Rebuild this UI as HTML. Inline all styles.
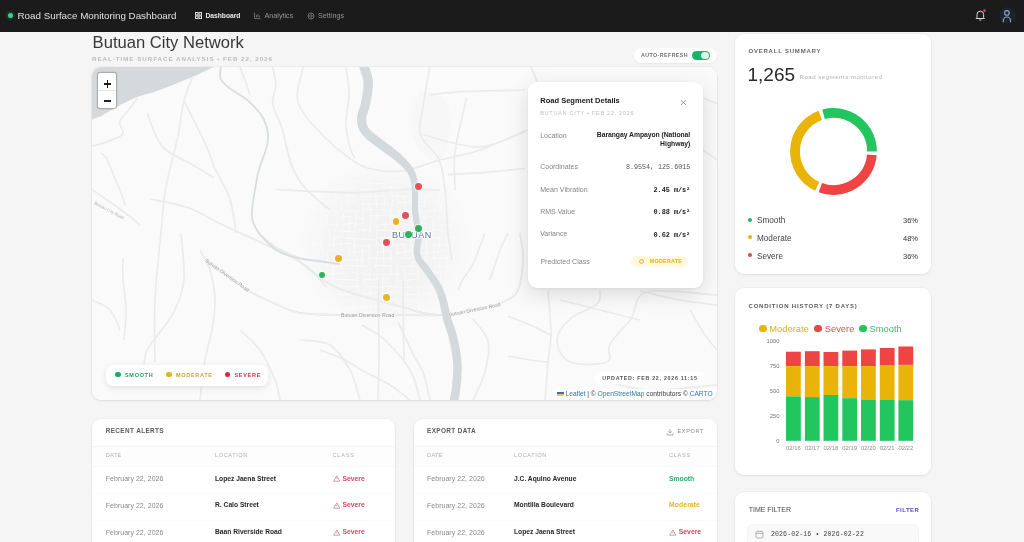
<!DOCTYPE html>
<html><head><meta charset="utf-8">
<style>
*{box-sizing:border-box;margin:0;padding:0}
html,body{width:1024px;height:542px;overflow:hidden;background:#f5f5f5;font-family:"Liberation Sans",sans-serif;color:#222}
.abs{position:absolute}
#hdr{position:absolute;left:0;top:0;width:1024px;height:31.5px;background:#1b1b1b}
.card{position:absolute;background:#fff;border-radius:9px;box-shadow:0 1px 3px rgba(0,0,0,0.07),0 0 0 1px rgba(0,0,0,0.025)}
.mk{position:absolute;width:6.8px;height:6.8px;border-radius:50%;margin:-3.4px 0 0 -3.4px;box-shadow:0 0 1.5px 1px rgba(255,255,255,.7)}
.t{position:absolute;white-space:nowrap;line-height:1}
</style></head><body><div id="root" style="position:absolute;left:0;top:0;width:1024px;height:542px;will-change:transform">
<div id="hdr">
  <div class="abs" style="left:8px;top:13px;width:5px;height:5px;border-radius:50%;background:#3ecf8e;box-shadow:0 0 4px rgba(62,207,142,.6)"></div>
  <div class="t" style="left:17.5px;top:11px;font-size:9.8px;color:#e0e0e0">Road Surface Monitoring Dashboard</div>
  <!-- nav -->
  <svg class="abs" style="left:195px;top:12px" width="7" height="7" viewBox="0 0 7 7"><g fill="none" stroke="#ddd" stroke-width="1"><rect x="0.5" y="0.5" width="2.5" height="2.5"/><rect x="4" y="0.5" width="2.5" height="2.5"/><rect x="0.5" y="4" width="2.5" height="2.5"/><rect x="4" y="4" width="2.5" height="2.5"/></g></svg>
  <div class="t" style="left:205.5px;top:12.6px;font-size:6.7px;font-weight:bold;color:#ececec">Dashboard</div>
  <svg class="abs" style="left:254px;top:12px" width="7" height="7" viewBox="0 0 7 7"><g fill="none" stroke="#777" stroke-width="0.9"><path d="M0.5 0.5V6.5H6.5"/><path d="M2.5 5V3M4 5V2M5.5 5V3.5"/></g></svg>
  <div class="t" style="left:264.5px;top:12px;font-size:7.2px;color:#969696">Analytics</div>
  <svg class="abs" style="left:307px;top:11.5px" width="8" height="8" viewBox="0 0 8 8"><g fill="none" stroke="#777" stroke-width="0.9"><circle cx="4" cy="4" r="1.3"/><circle cx="4" cy="4" r="3"/></g></svg>
  <div class="t" style="left:318px;top:12px;font-size:7.2px;color:#969696">Settings</div>
  <!-- bell -->
  <svg class="abs" style="left:975px;top:9px" width="11" height="12" viewBox="0 0 11 12"><g fill="none" stroke="#d8d8d8" stroke-width="1"><path d="M2 8.5V5.5a3.3 3.3 0 0 1 6.6 0V8.5L9.5 9.5H1.1Z"/><path d="M4.3 11h2"/></g><circle cx="9.5" cy="1.6" r="1.3" fill="#e0445a"/></svg>
  <svg class="abs" style="left:999px;top:7px" width="17" height="17" viewBox="0 0 17 17"><circle cx="8.5" cy="8.5" r="8.3" fill="#1d2333"/><g fill="none" stroke="#9aa5c2" stroke-width="1.1"><circle cx="7.9" cy="5.9" r="2.3"/><path d="M4.3 15.2V13.6a3.6 3.6 0 0 1 7.2 0V15.2"/></g></svg>
</div>

<!-- title -->
<div class="t" style="left:92.6px;top:35px;font-size:16.6px;color:#383838">Butuan City Network</div>
<div class="t" style="left:92px;top:56.4px;font-size:6.2px;letter-spacing:0.975px;color:#bcbcbc;font-weight:bold">REAL-TIME SURFACE ANALYSIS • FEB 22, 2026</div>

<!-- auto refresh -->
<div class="abs" style="left:633.5px;top:47.6px;width:83px;height:15.8px;border-radius:8px;background:#fff;box-shadow:0 1px 2px rgba(0,0,0,.06)"></div>
<div class="t" style="left:641px;top:53.3px;font-size:5.3px;letter-spacing:0.42px;color:#707070;font-weight:bold">AUTO-REFRESH</div>
<div class="abs" style="left:692.3px;top:50.6px;width:17.5px;height:9.5px;border-radius:5px;background:#14b566"></div>
<div class="abs" style="left:701.3px;top:51.6px;width:7.5px;height:7.5px;border-radius:50%;background:#d8f8ea"></div>

<!-- map card -->
<div id="map" class="abs" style="left:92px;top:67px;width:625px;height:333px;border-radius:9px;overflow:hidden;background:#fafafa;box-shadow:0 1px 3px rgba(0,0,0,.08),0 0 0 1px rgba(0,0,0,.03)">
<svg width="625" height="333" viewBox="92 67 625 333" style="position:absolute;left:0;top:0">
<rect x="92" y="67" width="625" height="333" fill="#fafafa"/>
<defs><radialGradient id="cg" cx="0.5" cy="0.5" r="0.5"><stop offset="0" stop-color="#f1f1f1"/><stop offset="0.65" stop-color="#f4f4f4"/><stop offset="1" stop-color="#fafafa"/></radialGradient></defs>
<path d="M330.0 172.0 C336.7 170.0 356.7 161.5 370.0 160.0 C383.3 158.5 397.5 161.0 410.0 163.0 C422.5 165.0 435.3 166.2 445.0 172.0 C454.7 177.8 463.5 185.0 468.0 198.0 C472.5 211.0 473.0 234.7 472.0 250.0 C471.0 265.3 468.7 278.7 462.0 290.0 C455.3 301.3 445.3 311.3 432.0 318.0 C418.7 324.7 398.7 329.3 382.0 330.0 C365.3 330.7 344.8 328.3 332.0 322.0 C319.2 315.7 310.7 304.0 305.0 292.0 C299.3 280.0 297.5 264.5 298.0 250.0 C298.5 235.5 302.7 218.0 308.0 205.0 C313.3 192.0 326.3 177.5 330.0 172.0 Z" fill="url(#cg)"/>
<path d="M420.0 90.0 C424.2 91.7 440.0 93.3 445.0 100.0 C450.0 106.7 450.8 120.0 450.0 130.0 C449.2 140.0 445.0 156.7 440.0 160.0 C435.0 163.3 425.0 156.7 420.0 150.0 C415.0 143.3 410.0 130.0 410.0 120.0 C410.0 110.0 418.3 95.0 420.0 90.0 Z" fill="#f7f7f7"/>
<path d="M298.7 182.8L300.1 201.9" stroke="#fafafa" stroke-width="1"/>
<path d="M300.0 206.1L298.1 215.1" stroke="#fafafa" stroke-width="1"/>
<path d="M298.8 219.7L299.7 228.8" stroke="#fafafa" stroke-width="1"/>
<path d="M299.2 235.8L300.5 245.9" stroke="#fafafa" stroke-width="1"/>
<path d="M299.7 253.6L301.9 269.8" stroke="#fafafa" stroke-width="1"/>
<path d="M305.9 212.2L306.2 222.7" stroke="#fafafa" stroke-width="1"/>
<path d="M307.2 229.6L307.6 240.6" stroke="#fafafa" stroke-width="1"/>
<path d="M305.7 244.9L305.2 262.2" stroke="#fafafa" stroke-width="1"/>
<path d="M306.8 265.4L306.3 278.8" stroke="#fafafa" stroke-width="1"/>
<path d="M314.6 189.9L313.0 211.4" stroke="#fafafa" stroke-width="1"/>
<path d="M315.1 216.9L314.9 233.8" stroke="#fafafa" stroke-width="1"/>
<path d="M312.9 237.5L313.7 262.2" stroke="#fafafa" stroke-width="1"/>
<path d="M314.0 268.7L312.2 279.3" stroke="#fafafa" stroke-width="1"/>
<path d="M320.4 207.1L321.8 229.9" stroke="#fafafa" stroke-width="1"/>
<path d="M320.9 235.5L322.4 253.4" stroke="#fafafa" stroke-width="1"/>
<path d="M321.5 261.0L319.2 277.1" stroke="#fafafa" stroke-width="1"/>
<path d="M322.5 283.3L322.3 297.2" stroke="#fafafa" stroke-width="1"/>
<path d="M327.9 186.2L326.7 194.6" stroke="#fafafa" stroke-width="1"/>
<path d="M328.8 197.3L326.5 206.3" stroke="#fafafa" stroke-width="1"/>
<path d="M329.1 209.8L326.3 224.4" stroke="#fafafa" stroke-width="1"/>
<path d="M329.2 229.1L329.3 246.5" stroke="#fafafa" stroke-width="1"/>
<path d="M327.7 253.7L327.4 266.4" stroke="#fafafa" stroke-width="1"/>
<path d="M327.0 273.7L326.7 298.0" stroke="#fafafa" stroke-width="1"/>
<path d="M328.0 301.4L328.4 303.5" stroke="#fafafa" stroke-width="1"/>
<path d="M335.2 165.2L336.8 179.5" stroke="#fafafa" stroke-width="1"/>
<path d="M335.4 185.6L335.7 202.4" stroke="#fafafa" stroke-width="1"/>
<path d="M335.8 204.7L336.5 228.0" stroke="#fafafa" stroke-width="1"/>
<path d="M334.7 234.8L333.4 249.5" stroke="#fafafa" stroke-width="1"/>
<path d="M333.7 255.3L333.8 264.3" stroke="#fafafa" stroke-width="1"/>
<path d="M333.7 267.3L333.0 281.1" stroke="#fafafa" stroke-width="1"/>
<path d="M334.6 284.0L333.1 287.2" stroke="#fafafa" stroke-width="1"/>
<path d="M341.5 198.8L341.5 211.1" stroke="#fafafa" stroke-width="1"/>
<path d="M343.5 213.8L341.9 236.2" stroke="#fafafa" stroke-width="1"/>
<path d="M340.8 241.1L341.4 250.6" stroke="#fafafa" stroke-width="1"/>
<path d="M341.0 254.2L340.1 269.7" stroke="#fafafa" stroke-width="1"/>
<path d="M347.6 194.1L349.1 211.3" stroke="#fafafa" stroke-width="1"/>
<path d="M349.6 219.2L348.0 241.8" stroke="#fafafa" stroke-width="1"/>
<path d="M349.8 246.0L349.1 256.9" stroke="#fafafa" stroke-width="1"/>
<path d="M348.2 263.5L350.2 269.5" stroke="#fafafa" stroke-width="1"/>
<path d="M356.7 211.9L354.9 233.8" stroke="#fafafa" stroke-width="1"/>
<path d="M354.6 238.9L354.1 253.0" stroke="#fafafa" stroke-width="1"/>
<path d="M356.6 256.6L357.8 269.0" stroke="#fafafa" stroke-width="1"/>
<path d="M357.5 273.7L357.8 297.7" stroke="#fafafa" stroke-width="1"/>
<path d="M355.2 301.8L354.8 312.4" stroke="#fafafa" stroke-width="1"/>
<path d="M362.9 199.3L363.6 221.6" stroke="#fafafa" stroke-width="1"/>
<path d="M363.5 228.4L364.6 237.9" stroke="#fafafa" stroke-width="1"/>
<path d="M362.9 244.5L361.7 265.3" stroke="#fafafa" stroke-width="1"/>
<path d="M363.9 272.0L364.9 285.7" stroke="#fafafa" stroke-width="1"/>
<path d="M364.3 290.1L363.9 304.9" stroke="#fafafa" stroke-width="1"/>
<path d="M362.0 307.9L364.6 318.1" stroke="#fafafa" stroke-width="1"/>
<path d="M370.5 173.0L369.4 197.7" stroke="#fafafa" stroke-width="1"/>
<path d="M368.5 203.0L371.9 213.2" stroke="#fafafa" stroke-width="1"/>
<path d="M371.3 219.1L369.7 236.1" stroke="#fafafa" stroke-width="1"/>
<path d="M369.1 243.3L369.0 265.3" stroke="#fafafa" stroke-width="1"/>
<path d="M370.3 269.1L369.0 281.2" stroke="#fafafa" stroke-width="1"/>
<path d="M371.2 285.7L369.4 295.9" stroke="#fafafa" stroke-width="1"/>
<path d="M371.2 300.7L369.7 313.7" stroke="#fafafa" stroke-width="1"/>
<path d="M375.6 192.6L376.8 209.5" stroke="#fafafa" stroke-width="1"/>
<path d="M377.9 212.6L375.7 220.7" stroke="#fafafa" stroke-width="1"/>
<path d="M377.2 225.5L376.3 245.8" stroke="#fafafa" stroke-width="1"/>
<path d="M377.9 250.9L375.4 268.4" stroke="#fafafa" stroke-width="1"/>
<path d="M376.3 273.7L378.1 286.0" stroke="#fafafa" stroke-width="1"/>
<path d="M377.8 291.0L378.6 294.6" stroke="#fafafa" stroke-width="1"/>
<path d="M384.6 198.7L383.8 215.4" stroke="#fafafa" stroke-width="1"/>
<path d="M385.3 220.6L384.8 236.7" stroke="#fafafa" stroke-width="1"/>
<path d="M383.3 244.0L384.2 268.0" stroke="#fafafa" stroke-width="1"/>
<path d="M382.9 275.7L382.5 292.9" stroke="#fafafa" stroke-width="1"/>
<path d="M391.5 169.0L392.1 178.2" stroke="#fafafa" stroke-width="1"/>
<path d="M391.6 185.6L391.6 196.2" stroke="#fafafa" stroke-width="1"/>
<path d="M392.4 199.1L389.9 222.1" stroke="#fafafa" stroke-width="1"/>
<path d="M391.0 229.8L393.0 244.6" stroke="#fafafa" stroke-width="1"/>
<path d="M390.8 251.6L391.1 262.3" stroke="#fafafa" stroke-width="1"/>
<path d="M390.5 266.4L391.9 275.6" stroke="#fafafa" stroke-width="1"/>
<path d="M397.5 195.5L398.5 203.8" stroke="#fafafa" stroke-width="1"/>
<path d="M399.5 208.9L399.2 217.9" stroke="#fafafa" stroke-width="1"/>
<path d="M397.3 225.8L396.2 235.6" stroke="#fafafa" stroke-width="1"/>
<path d="M396.9 242.2L397.7 254.8" stroke="#fafafa" stroke-width="1"/>
<path d="M397.3 262.3L396.6 284.2" stroke="#fafafa" stroke-width="1"/>
<path d="M403.7 196.4L405.8 205.9" stroke="#fafafa" stroke-width="1"/>
<path d="M406.3 210.5L405.5 219.7" stroke="#fafafa" stroke-width="1"/>
<path d="M406.1 226.5L403.3 235.9" stroke="#fafafa" stroke-width="1"/>
<path d="M404.5 243.1L405.2 258.8" stroke="#fafafa" stroke-width="1"/>
<path d="M403.9 266.4L405.1 278.9" stroke="#fafafa" stroke-width="1"/>
<path d="M404.0 282.4L403.2 292.2" stroke="#fafafa" stroke-width="1"/>
<path d="M404.4 295.4L406.0 305.5" stroke="#fafafa" stroke-width="1"/>
<path d="M410.6 192.5L411.0 206.4" stroke="#fafafa" stroke-width="1"/>
<path d="M412.2 208.5L410.8 229.0" stroke="#fafafa" stroke-width="1"/>
<path d="M410.8 233.8L413.3 257.7" stroke="#fafafa" stroke-width="1"/>
<path d="M413.0 262.3L411.6 271.6" stroke="#fafafa" stroke-width="1"/>
<path d="M420.0 202.8L419.8 216.7" stroke="#fafafa" stroke-width="1"/>
<path d="M418.5 222.5L417.2 237.3" stroke="#fafafa" stroke-width="1"/>
<path d="M419.7 240.1L418.0 249.3" stroke="#fafafa" stroke-width="1"/>
<path d="M420.0 252.3L420.5 261.7" stroke="#fafafa" stroke-width="1"/>
<path d="M418.2 267.8L418.2 280.6" stroke="#fafafa" stroke-width="1"/>
<path d="M418.8 285.3L418.1 296.0" stroke="#fafafa" stroke-width="1"/>
<path d="M419.1 303.8L418.0 323.9" stroke="#fafafa" stroke-width="1"/>
<path d="M425.6 182.0L425.9 190.0" stroke="#fafafa" stroke-width="1"/>
<path d="M426.0 195.1L424.0 206.5" stroke="#fafafa" stroke-width="1"/>
<path d="M425.7 210.1L424.2 219.6" stroke="#fafafa" stroke-width="1"/>
<path d="M425.2 221.7L426.3 234.9" stroke="#fafafa" stroke-width="1"/>
<path d="M426.5 240.1L426.9 260.8" stroke="#fafafa" stroke-width="1"/>
<path d="M425.5 268.1L427.9 282.7" stroke="#fafafa" stroke-width="1"/>
<path d="M434.0 204.8L434.6 213.6" stroke="#fafafa" stroke-width="1"/>
<path d="M433.9 219.3L431.6 239.8" stroke="#fafafa" stroke-width="1"/>
<path d="M434.0 245.0L434.2 261.5" stroke="#fafafa" stroke-width="1"/>
<path d="M434.2 268.5L433.7 286.4" stroke="#fafafa" stroke-width="1"/>
<path d="M431.6 292.6L431.5 301.8" stroke="#fafafa" stroke-width="1"/>
<path d="M440.4 170.8L440.5 188.3" stroke="#fafafa" stroke-width="1"/>
<path d="M438.5 194.3L441.2 210.7" stroke="#fafafa" stroke-width="1"/>
<path d="M440.1 217.2L440.6 233.7" stroke="#fafafa" stroke-width="1"/>
<path d="M439.3 236.1L438.3 256.6" stroke="#fafafa" stroke-width="1"/>
<path d="M439.1 260.2L441.0 280.6" stroke="#fafafa" stroke-width="1"/>
<path d="M439.6 288.5L439.9 304.9" stroke="#fafafa" stroke-width="1"/>
<path d="M440.4 311.0L440.6 314.3" stroke="#fafafa" stroke-width="1"/>
<path d="M446.4 173.1L447.3 193.7" stroke="#fafafa" stroke-width="1"/>
<path d="M446.3 195.8L447.7 204.8" stroke="#fafafa" stroke-width="1"/>
<path d="M446.4 211.0L447.1 230.5" stroke="#fafafa" stroke-width="1"/>
<path d="M445.9 235.3L448.6 251.2" stroke="#fafafa" stroke-width="1"/>
<path d="M448.3 254.4L445.1 276.5" stroke="#fafafa" stroke-width="1"/>
<path d="M453.3 210.1L452.8 225.7" stroke="#fafafa" stroke-width="1"/>
<path d="M454.2 233.4L452.6 245.0" stroke="#fafafa" stroke-width="1"/>
<path d="M452.9 250.1L455.3 274.3" stroke="#fafafa" stroke-width="1"/>
<path d="M454.6 279.4L452.9 302.5" stroke="#fafafa" stroke-width="1"/>
<path d="M452.6 309.8L452.0 322.9" stroke="#fafafa" stroke-width="1"/>
<path d="M460.5 189.8L460.3 200.2" stroke="#fafafa" stroke-width="1"/>
<path d="M461.8 207.2L462.4 215.3" stroke="#fafafa" stroke-width="1"/>
<path d="M461.6 218.0L462.6 241.7" stroke="#fafafa" stroke-width="1"/>
<path d="M460.7 245.5L463.0 259.8" stroke="#fafafa" stroke-width="1"/>
<path d="M460.8 265.3L460.1 279.5" stroke="#fafafa" stroke-width="1"/>
<path d="M469.3 170.6L467.0 183.4" stroke="#fafafa" stroke-width="1"/>
<path d="M467.1 187.0L467.5 203.7" stroke="#fafafa" stroke-width="1"/>
<path d="M468.9 211.5L468.5 234.5" stroke="#fafafa" stroke-width="1"/>
<path d="M468.1 242.0L468.9 266.0" stroke="#fafafa" stroke-width="1"/>
<path d="M467.9 268.3L469.0 288.7" stroke="#fafafa" stroke-width="1"/>
<path d="M466.6 294.6L469.7 307.5" stroke="#fafafa" stroke-width="1"/>
<path d="M467.5 310.2L467.2 314.3" stroke="#fafafa" stroke-width="1"/>
<path d="M339.1 167.4L361.5 168.2" stroke="#fafafa" stroke-width="1"/>
<path d="M365.8 167.0L377.5 166.8" stroke="#fafafa" stroke-width="1"/>
<path d="M385.0 167.2L403.9 169.6" stroke="#fafafa" stroke-width="1"/>
<path d="M411.9 166.9L429.8 166.8" stroke="#fafafa" stroke-width="1"/>
<path d="M432.3 166.8L447.8 167.0" stroke="#fafafa" stroke-width="1"/>
<path d="M322.8 174.7L347.3 174.7" stroke="#fafafa" stroke-width="1"/>
<path d="M352.4 174.5L368.7 173.2" stroke="#fafafa" stroke-width="1"/>
<path d="M372.4 173.9L401.7 175.0" stroke="#fafafa" stroke-width="1"/>
<path d="M407.4 174.1L434.4 174.1" stroke="#fafafa" stroke-width="1"/>
<path d="M437.9 174.8L454.7 176.8" stroke="#fafafa" stroke-width="1"/>
<path d="M461.8 173.6L468.4 173.1" stroke="#fafafa" stroke-width="1"/>
<path d="M335.8 180.5L356.7 181.6" stroke="#fafafa" stroke-width="1"/>
<path d="M364.3 183.1L390.5 183.9" stroke="#fafafa" stroke-width="1"/>
<path d="M394.0 181.0L404.4 182.1" stroke="#fafafa" stroke-width="1"/>
<path d="M410.5 182.7L439.2 182.6" stroke="#fafafa" stroke-width="1"/>
<path d="M445.8 182.2L455.1 180.2" stroke="#fafafa" stroke-width="1"/>
<path d="M309.3 188.4L331.5 187.5" stroke="#fafafa" stroke-width="1"/>
<path d="M335.0 189.6L357.0 187.4" stroke="#fafafa" stroke-width="1"/>
<path d="M359.4 189.2L379.0 188.6" stroke="#fafafa" stroke-width="1"/>
<path d="M382.3 187.5L403.5 188.2" stroke="#fafafa" stroke-width="1"/>
<path d="M408.3 189.4L437.4 190.5" stroke="#fafafa" stroke-width="1"/>
<path d="M442.3 188.2L455.4 190.8" stroke="#fafafa" stroke-width="1"/>
<path d="M461.6 187.6L469.4 189.0" stroke="#fafafa" stroke-width="1"/>
<path d="M316.8 197.3L339.5 194.9" stroke="#fafafa" stroke-width="1"/>
<path d="M341.7 195.8L357.1 196.7" stroke="#fafafa" stroke-width="1"/>
<path d="M360.3 196.7L385.8 196.0" stroke="#fafafa" stroke-width="1"/>
<path d="M389.1 195.4L418.4 197.3" stroke="#fafafa" stroke-width="1"/>
<path d="M421.8 196.8L434.7 195.2" stroke="#fafafa" stroke-width="1"/>
<path d="M442.4 195.1L448.2 194.9" stroke="#fafafa" stroke-width="1"/>
<path d="M326.6 202.7L337.8 201.9" stroke="#fafafa" stroke-width="1"/>
<path d="M345.7 201.7L356.8 201.2" stroke="#fafafa" stroke-width="1"/>
<path d="M361.2 204.2L388.9 203.9" stroke="#fafafa" stroke-width="1"/>
<path d="M396.9 202.5L425.4 201.7" stroke="#fafafa" stroke-width="1"/>
<path d="M433.0 201.6L457.4 203.7" stroke="#fafafa" stroke-width="1"/>
<path d="M461.7 202.5L470.4 201.7" stroke="#fafafa" stroke-width="1"/>
<path d="M311.2 208.9L340.2 211.9" stroke="#fafafa" stroke-width="1"/>
<path d="M343.5 211.0L359.3 211.3" stroke="#fafafa" stroke-width="1"/>
<path d="M363.9 209.9L373.0 209.5" stroke="#fafafa" stroke-width="1"/>
<path d="M380.5 209.6L392.7 211.6" stroke="#fafafa" stroke-width="1"/>
<path d="M394.9 210.9L412.0 211.1" stroke="#fafafa" stroke-width="1"/>
<path d="M414.2 208.7L423.0 211.7" stroke="#fafafa" stroke-width="1"/>
<path d="M426.5 211.2L451.0 209.4" stroke="#fafafa" stroke-width="1"/>
<path d="M338.3 217.6L352.1 216.3" stroke="#fafafa" stroke-width="1"/>
<path d="M355.7 217.8L363.8 218.7" stroke="#fafafa" stroke-width="1"/>
<path d="M369.6 215.6L398.4 215.9" stroke="#fafafa" stroke-width="1"/>
<path d="M403.2 218.4L432.3 216.5" stroke="#fafafa" stroke-width="1"/>
<path d="M435.8 217.0L453.2 218.7" stroke="#fafafa" stroke-width="1"/>
<path d="M456.3 217.7L459.7 218.3" stroke="#fafafa" stroke-width="1"/>
<path d="M324.3 223.6L339.3 225.1" stroke="#fafafa" stroke-width="1"/>
<path d="M341.8 224.8L354.1 223.0" stroke="#fafafa" stroke-width="1"/>
<path d="M356.5 224.2L365.3 223.3" stroke="#fafafa" stroke-width="1"/>
<path d="M373.2 225.5L400.6 223.1" stroke="#fafafa" stroke-width="1"/>
<path d="M403.1 224.0L413.2 224.8" stroke="#fafafa" stroke-width="1"/>
<path d="M417.9 223.8L431.0 224.5" stroke="#fafafa" stroke-width="1"/>
<path d="M437.1 225.0L450.5 224.7" stroke="#fafafa" stroke-width="1"/>
<path d="M333.6 230.6L354.1 232.0" stroke="#fafafa" stroke-width="1"/>
<path d="M357.3 230.2L370.7 229.6" stroke="#fafafa" stroke-width="1"/>
<path d="M378.0 230.5L398.8 230.6" stroke="#fafafa" stroke-width="1"/>
<path d="M406.7 230.2L425.9 232.2" stroke="#fafafa" stroke-width="1"/>
<path d="M431.8 229.8L449.4 230.9" stroke="#fafafa" stroke-width="1"/>
<path d="M333.6 237.4L342.5 236.5" stroke="#fafafa" stroke-width="1"/>
<path d="M345.6 238.2L375.1 239.7" stroke="#fafafa" stroke-width="1"/>
<path d="M379.3 237.8L406.3 237.0" stroke="#fafafa" stroke-width="1"/>
<path d="M413.0 236.8L441.8 238.4" stroke="#fafafa" stroke-width="1"/>
<path d="M447.5 237.6L460.3 236.6" stroke="#fafafa" stroke-width="1"/>
<path d="M463.5 238.3L469.3 238.6" stroke="#fafafa" stroke-width="1"/>
<path d="M300.5 244.1L323.4 244.2" stroke="#fafafa" stroke-width="1"/>
<path d="M326.6 245.1L352.1 243.3" stroke="#fafafa" stroke-width="1"/>
<path d="M354.7 245.2L371.4 245.6" stroke="#fafafa" stroke-width="1"/>
<path d="M373.9 245.6L385.5 244.6" stroke="#fafafa" stroke-width="1"/>
<path d="M389.2 246.4L404.0 244.2" stroke="#fafafa" stroke-width="1"/>
<path d="M409.4 244.7L425.3 246.5" stroke="#fafafa" stroke-width="1"/>
<path d="M433.3 244.1L449.3 245.9" stroke="#fafafa" stroke-width="1"/>
<path d="M300.2 253.0L317.6 251.6" stroke="#fafafa" stroke-width="1"/>
<path d="M324.9 251.0L343.0 250.1" stroke="#fafafa" stroke-width="1"/>
<path d="M348.3 253.2L370.4 250.4" stroke="#fafafa" stroke-width="1"/>
<path d="M376.1 252.0L392.3 250.6" stroke="#fafafa" stroke-width="1"/>
<path d="M396.0 253.3L415.5 250.4" stroke="#fafafa" stroke-width="1"/>
<path d="M420.4 253.4L446.1 250.8" stroke="#fafafa" stroke-width="1"/>
<path d="M448.9 253.4L468.9 251.9" stroke="#fafafa" stroke-width="1"/>
<path d="M337.0 259.4L364.9 260.3" stroke="#fafafa" stroke-width="1"/>
<path d="M367.9 258.2L393.2 258.6" stroke="#fafafa" stroke-width="1"/>
<path d="M400.3 258.0L426.5 257.9" stroke="#fafafa" stroke-width="1"/>
<path d="M430.9 258.7L450.3 257.5" stroke="#fafafa" stroke-width="1"/>
<path d="M329.0 266.2L337.9 267.0" stroke="#fafafa" stroke-width="1"/>
<path d="M340.1 264.9L366.6 266.4" stroke="#fafafa" stroke-width="1"/>
<path d="M371.9 265.4L393.7 265.7" stroke="#fafafa" stroke-width="1"/>
<path d="M399.2 266.5L416.5 265.8" stroke="#fafafa" stroke-width="1"/>
<path d="M421.2 266.4L429.7 266.0" stroke="#fafafa" stroke-width="1"/>
<path d="M433.1 266.8L457.9 265.8" stroke="#fafafa" stroke-width="1"/>
<path d="M461.0 264.8L468.7 264.5" stroke="#fafafa" stroke-width="1"/>
<path d="M303.7 271.6L322.9 273.5" stroke="#fafafa" stroke-width="1"/>
<path d="M325.4 273.8L349.5 273.0" stroke="#fafafa" stroke-width="1"/>
<path d="M351.8 272.6L370.9 274.8" stroke="#fafafa" stroke-width="1"/>
<path d="M373.8 274.5L400.6 273.9" stroke="#fafafa" stroke-width="1"/>
<path d="M407.5 274.4L419.8 273.0" stroke="#fafafa" stroke-width="1"/>
<path d="M427.5 272.0L454.1 274.2" stroke="#fafafa" stroke-width="1"/>
<path d="M302.6 279.0L327.3 281.6" stroke="#fafafa" stroke-width="1"/>
<path d="M330.9 278.9L356.9 280.0" stroke="#fafafa" stroke-width="1"/>
<path d="M364.4 279.3L377.0 280.0" stroke="#fafafa" stroke-width="1"/>
<path d="M380.9 279.0L389.7 278.6" stroke="#fafafa" stroke-width="1"/>
<path d="M397.3 281.2L420.2 278.7" stroke="#fafafa" stroke-width="1"/>
<path d="M427.0 280.1L437.5 280.5" stroke="#fafafa" stroke-width="1"/>
<path d="M441.6 280.2L451.2 280.3" stroke="#fafafa" stroke-width="1"/>
<path d="M304.2 286.7L326.0 288.2" stroke="#fafafa" stroke-width="1"/>
<path d="M329.6 287.2L359.4 286.4" stroke="#fafafa" stroke-width="1"/>
<path d="M366.0 286.0L383.7 288.0" stroke="#fafafa" stroke-width="1"/>
<path d="M386.0 286.3L412.1 287.6" stroke="#fafafa" stroke-width="1"/>
<path d="M420.0 287.5L440.9 286.3" stroke="#fafafa" stroke-width="1"/>
<path d="M442.9 285.9L451.6 287.5" stroke="#fafafa" stroke-width="1"/>
<path d="M456.2 288.2L471.8 285.5" stroke="#fafafa" stroke-width="1"/>
<path d="M326.1 293.6L334.2 292.4" stroke="#fafafa" stroke-width="1"/>
<path d="M338.3 294.3L351.3 294.4" stroke="#fafafa" stroke-width="1"/>
<path d="M354.5 293.9L376.2 292.5" stroke="#fafafa" stroke-width="1"/>
<path d="M383.8 292.9L397.2 292.4" stroke="#fafafa" stroke-width="1"/>
<path d="M403.0 294.8L430.2 293.6" stroke="#fafafa" stroke-width="1"/>
<path d="M433.8 294.4L440.7 294.2" stroke="#fafafa" stroke-width="1"/>
<path d="M325.8 301.7L354.4 300.0" stroke="#fafafa" stroke-width="1"/>
<path d="M361.9 301.1L370.8 300.6" stroke="#fafafa" stroke-width="1"/>
<path d="M374.3 301.8L383.5 299.0" stroke="#fafafa" stroke-width="1"/>
<path d="M388.8 299.9L417.5 299.8" stroke="#fafafa" stroke-width="1"/>
<path d="M423.2 301.4L442.3 302.3" stroke="#fafafa" stroke-width="1"/>
<path d="M445.4 300.4L454.2 299.2" stroke="#fafafa" stroke-width="1"/>
<path d="M331.3 309.0L339.5 309.0" stroke="#fafafa" stroke-width="1"/>
<path d="M344.3 307.9L368.6 306.9" stroke="#fafafa" stroke-width="1"/>
<path d="M371.2 306.6L384.3 307.3" stroke="#fafafa" stroke-width="1"/>
<path d="M390.8 309.0L414.1 308.8" stroke="#fafafa" stroke-width="1"/>
<path d="M417.7 307.8L437.9 309.2" stroke="#fafafa" stroke-width="1"/>
<path d="M443.0 308.4L456.9 309.9" stroke="#fafafa" stroke-width="1"/>
<path d="M460.2 306.5L462.9 307.0" stroke="#fafafa" stroke-width="1"/>
<path d="M329.8 314.5L354.2 316.5" stroke="#fafafa" stroke-width="1"/>
<path d="M358.1 316.2L371.4 315.5" stroke="#fafafa" stroke-width="1"/>
<path d="M377.6 316.4L400.2 314.9" stroke="#fafafa" stroke-width="1"/>
<path d="M407.2 316.1L430.6 314.7" stroke="#fafafa" stroke-width="1"/>
<path d="M436.9 314.4L457.5 313.8" stroke="#fafafa" stroke-width="1"/>
<path d="M463.2 316.2L470.2 313.6" stroke="#fafafa" stroke-width="1"/>
<path d="M304.3 320.9L319.9 320.1" stroke="#fafafa" stroke-width="1"/>
<path d="M322.1 322.4L345.3 322.8" stroke="#fafafa" stroke-width="1"/>
<path d="M351.8 322.3L361.2 321.5" stroke="#fafafa" stroke-width="1"/>
<path d="M368.1 323.2L394.1 320.3" stroke="#fafafa" stroke-width="1"/>
<path d="M401.4 323.3L429.5 320.4" stroke="#fafafa" stroke-width="1"/>
<path d="M432.7 320.6L443.2 323.4" stroke="#fafafa" stroke-width="1"/>
<path d="M450.0 323.0L469.7 322.5" stroke="#fafafa" stroke-width="1"/>
<path d="M304.0 328.1L328.7 328.3" stroke="#fafafa" stroke-width="1"/>
<path d="M333.2 328.3L341.7 328.1" stroke="#fafafa" stroke-width="1"/>
<path d="M348.0 328.5L364.1 330.9" stroke="#fafafa" stroke-width="1"/>
<path d="M369.1 329.4L395.8 327.1" stroke="#fafafa" stroke-width="1"/>
<path d="M400.3 329.8L417.9 328.4" stroke="#fafafa" stroke-width="1"/>
<path d="M424.1 328.1L443.1 330.4" stroke="#fafafa" stroke-width="1"/>
<path d="M92 67 L214 67 L205 71 L196 75.4 L171.6 85.4 L153.3 92.3 L136.4 96.9 L119.6 105.3 L101.2 116 L92 119.5 Z" fill="#d5d9db"/>
<path d="M303.3 67.0 C302.3 71.6 297.2 86.9 297.2 94.6 C297.2 102.3 298.7 105.9 303.3 113.0 C307.9 120.1 317.7 130.3 324.8 137.4 C331.9 144.5 339.1 150.7 346.2 155.8 C353.3 160.9 358.3 165.5 367.6 168.0 C376.9 170.5 389.9 172.3 402.0 171.0 C414.1 169.7 427.0 163.5 440.0 160.0 C453.0 156.5 465.5 155.0 480.0 150.0 C494.5 145.0 519.2 133.3 527.0 130.0" fill="none" stroke="#ebebeb" stroke-width="1.7"/>
<path d="M272.7 67.0 C273.2 70.1 275.8 79.3 275.8 85.4 C275.8 91.5 271.7 96.6 272.7 103.8 C273.7 111.0 279.4 120.1 282.0 128.3 C284.6 136.5 286.0 145.7 288.0 152.8 C290.0 159.9 290.9 164.9 294.0 171.0 C297.1 177.1 300.4 183.0 306.4 189.5 C312.4 196.0 326.1 206.6 330.0 210.0" fill="none" stroke="#ebebeb" stroke-width="1.7"/>
<path d="M138.0 97.6 C136.5 99.7 131.9 105.9 128.8 110.0 C125.7 114.1 120.6 117.9 119.6 122.0 C118.6 126.1 125.7 130.8 122.6 134.4 C119.5 138.0 106.3 141.7 101.2 143.6 C96.1 145.5 93.5 145.6 92.0 146.0" fill="none" stroke="#ebebeb" stroke-width="1.7"/>
<path d="M101.0 153.0 C102.0 154.0 105.0 155.5 107.0 159.0 C109.0 162.5 110.8 168.8 113.0 174.0 C115.2 179.2 118.0 184.8 120.0 190.0 C122.0 195.2 124.2 202.5 125.0 205.0" fill="none" stroke="#ebebeb" stroke-width="1.7"/>
<path d="M147.0 113.0 C149.6 118.6 154.7 137.9 162.4 146.6 C170.1 155.3 184.4 159.8 193.0 165.0 C201.6 170.2 210.5 175.8 214.0 178.0" fill="none" stroke="#ebebeb" stroke-width="1.7"/>
<path d="M92.0 189.5 C97.1 193.1 114.6 205.1 122.6 211.0 C130.6 216.9 137.1 222.7 140.0 225.0" fill="none" stroke="#ebebeb" stroke-width="1.7"/>
<path d="M214.5 168.0 C217.1 173.1 226.2 187.9 229.8 198.7 C233.4 209.5 235.0 227.3 236.0 233.0" fill="none" stroke="#ebebeb" stroke-width="1.7"/>
<path d="M275.8 189.5 C288.6 190.0 331.3 192.6 352.3 192.6 C373.3 192.6 387.4 189.9 402.0 189.5 C416.6 189.1 433.7 189.9 440.0 190.0" fill="none" stroke="#ebebeb" stroke-width="1.7"/>
<path d="M177.8 137.4 C175.8 146.1 168.3 173.6 165.5 189.5 C162.7 205.4 162.8 214.6 161.0 233.0 C159.2 251.4 156.0 278.5 155.0 300.0 C154.0 321.5 155.0 351.7 155.0 362.0" fill="none" stroke="#ebebeb" stroke-width="1.7"/>
<path d="M184.0 100.7 C187.6 107.8 200.2 132.4 205.3 143.6 C210.4 154.8 213.0 163.9 214.5 168.0" fill="none" stroke="#ebebeb" stroke-width="1.7"/>
<path d="M193.0 76.0 C191.5 80.1 186.5 90.5 184.0 100.7 C181.5 110.9 179.0 130.9 178.0 137.0" fill="none" stroke="#ebebeb" stroke-width="1.7"/>
<path d="M150.0 199.0 C156.4 200.5 176.0 203.4 188.3 207.8 C200.6 212.2 211.4 219.6 223.7 225.5 C236.0 231.4 248.7 236.6 262.0 243.0 C275.3 249.4 292.6 256.6 303.4 264.0 C314.2 271.4 323.1 283.6 327.0 287.5" fill="none" stroke="#ebebeb" stroke-width="1.7"/>
<path d="M429.7 67.0 C428.7 73.2 425.0 92.7 423.5 104.0 C422.0 115.3 417.9 125.5 420.5 134.7 C423.1 143.9 434.9 150.1 439.0 159.3 C443.1 168.5 443.5 177.7 445.0 190.0 C446.5 202.3 446.8 221.3 448.0 233.0 C449.2 244.7 451.3 255.5 452.0 260.0" fill="none" stroke="#ebebeb" stroke-width="1.7"/>
<path d="M429.7 94.7 C434.8 94.2 444.6 92.4 460.5 91.6 C476.4 90.8 514.2 90.3 525.0 90.0" fill="none" stroke="#ebebeb" stroke-width="1.7"/>
<path d="M466.6 97.8 C465.1 104.5 459.4 127.6 457.4 137.8 C455.3 148.1 454.7 150.6 454.3 159.3 C453.9 168.0 454.9 184.9 455.0 190.0" fill="none" stroke="#ebebeb" stroke-width="1.7"/>
<path d="M423.5 134.7 C432.8 136.8 462.1 147.5 479.0 147.0 C495.9 146.5 517.3 134.2 525.0 131.6" fill="none" stroke="#ebebeb" stroke-width="1.7"/>
<path d="M448.0 174.7 C455.7 174.2 481.2 172.6 494.0 171.6 C506.8 170.6 519.8 169.0 525.0 168.5" fill="none" stroke="#ebebeb" stroke-width="1.7"/>
<path d="M531.0 67.0 C532.1 69.6 536.3 79.8 537.4 82.4" fill="none" stroke="#ebebeb" stroke-width="1.7"/>
<path d="M703.5 97.8 C705.8 98.8 714.8 103.0 717.0 104.0" fill="none" stroke="#ebebeb" stroke-width="1.7"/>
<path d="M703.0 150.0 C705.3 151.7 714.7 158.3 717.0 160.0" fill="none" stroke="#ebebeb" stroke-width="1.7"/>
<path d="M346.0 67.0 C346.5 71.7 349.0 85.8 349.0 95.0 C349.0 104.2 346.0 113.8 346.0 122.0 C346.0 130.2 347.5 137.8 349.0 144.0 C350.5 150.2 354.0 156.5 355.0 159.0" fill="none" stroke="#ebebeb" stroke-width="1.7"/>
<path d="M240.0 67.0 C240.8 69.2 243.3 75.3 245.0 80.0 C246.7 84.7 249.2 92.5 250.0 95.0" fill="none" stroke="#ebebeb" stroke-width="1.7"/>
<path d="M181.0 233.0 C181.5 240.7 185.0 266.2 184.0 279.0 C183.0 291.8 179.0 301.2 175.0 310.0 C171.0 318.8 164.7 325.3 160.0 332.0 C155.3 338.7 149.7 344.5 147.0 350.0 C144.3 355.5 144.5 362.5 144.0 365.0" fill="none" stroke="#ebebeb" stroke-width="1.7"/>
<path d="M123.0 258.0 C123.0 261.5 122.5 270.3 123.0 279.0 C123.5 287.7 125.8 299.8 126.0 310.0 C126.2 320.2 124.3 335.0 124.0 340.0" fill="none" stroke="#ebebeb" stroke-width="1.7"/>
<path d="M258.0 233.0 C261.2 235.5 270.0 243.8 277.0 248.0 C284.0 252.2 296.2 256.3 300.0 258.0" fill="none" stroke="#ebebeb" stroke-width="1.7"/>
<path d="M92.0 300.0 C95.0 301.7 105.3 305.0 110.0 310.0 C114.7 315.0 118.3 326.7 120.0 330.0" fill="none" stroke="#ebebeb" stroke-width="1.7"/>
<path d="M200.0 250.0 C201.7 253.3 207.5 261.7 210.0 270.0 C212.5 278.3 214.7 290.0 215.0 300.0 C215.3 310.0 213.7 320.0 212.0 330.0 C210.3 340.0 207.0 348.3 205.0 360.0 C203.0 371.7 200.8 393.3 200.0 400.0" fill="none" stroke="#ebebeb" stroke-width="1.7"/>
<path d="M240.0 330.0 C243.3 333.3 254.2 341.7 260.0 350.0 C265.8 358.3 271.7 371.7 275.0 380.0 C278.3 388.3 279.2 396.7 280.0 400.0" fill="none" stroke="#ebebeb" stroke-width="1.7"/>
<path d="M378.6 280.0 C378.6 286.7 378.5 306.7 378.6 320.0 C378.7 333.3 379.1 346.7 379.0 360.0 C378.9 373.3 378.2 393.3 378.0 400.0" fill="none" stroke="#ebebeb" stroke-width="1.7"/>
<path d="M403.2 280.0 C403.2 286.7 403.1 306.7 403.2 320.0 C403.3 333.3 403.9 353.3 404.0 360.0" fill="none" stroke="#ebebeb" stroke-width="1.7"/>
<path d="M398.0 322.0 C400.7 327.7 409.8 347.7 414.0 356.0 C418.2 364.3 420.3 364.7 423.0 372.0 C425.7 379.3 428.8 395.3 430.0 400.0" fill="none" stroke="#ebebeb" stroke-width="1.7"/>
<path d="M485.0 233.0 C483.0 238.2 476.7 256.3 473.0 264.0 C469.3 271.7 465.5 274.7 463.0 279.0 C460.5 283.3 458.8 288.2 458.0 290.0" fill="none" stroke="#ebebeb" stroke-width="1.7"/>
<path d="M473.0 319.0 C475.5 322.7 486.0 332.2 488.0 341.0 C490.0 349.8 487.5 362.2 485.0 372.0 C482.5 381.8 475.0 395.3 473.0 400.0" fill="none" stroke="#ebebeb" stroke-width="1.7"/>
<path d="M362.0 325.0 C366.0 327.7 377.8 333.2 386.0 341.0 C394.2 348.8 405.3 362.2 411.0 372.0 C416.7 381.8 418.5 395.3 420.0 400.0" fill="none" stroke="#ebebeb" stroke-width="1.7"/>
<path d="M300.0 340.0 C305.0 340.8 321.7 340.0 330.0 345.0 C338.3 350.0 345.0 360.8 350.0 370.0 C355.0 379.2 358.3 395.0 360.0 400.0" fill="none" stroke="#ebebeb" stroke-width="1.7"/>
<path d="M320.0 350.0 C324.2 351.7 337.5 356.3 345.0 360.0 C352.5 363.7 357.5 367.8 365.0 372.0 C372.5 376.2 382.5 380.3 390.0 385.0 C397.5 389.7 406.7 397.5 410.0 400.0" fill="none" stroke="#ebebeb" stroke-width="1.7"/>
<path d="M508.0 233.0 C506.7 235.8 503.0 242.2 500.0 250.0 C497.0 257.8 491.7 275.0 490.0 280.0" fill="none" stroke="#ebebeb" stroke-width="1.7"/>
<path d="M548.0 290.0 C548.5 297.5 551.0 323.0 551.0 335.0 C551.0 347.0 549.0 350.8 548.0 362.0 C547.0 373.2 545.5 395.3 545.0 402.0" fill="none" stroke="#ebebeb" stroke-width="1.7"/>
<path d="M600.0 290.0 C599.5 292.3 602.0 299.2 597.0 304.0 C592.0 308.8 576.7 312.8 570.0 319.0 C563.3 325.2 557.0 333.8 557.0 341.0 C557.0 348.2 561.7 358.5 570.0 362.0 C578.3 365.5 600.3 365.0 607.0 362.0 C613.7 359.0 606.0 351.2 610.0 344.0 C614.0 336.8 624.8 327.7 631.0 319.0 C637.2 310.3 632.7 296.0 647.0 292.0 C661.3 288.0 705.3 294.5 717.0 295.0" fill="none" stroke="#ebebeb" stroke-width="1.7"/>
<path d="M508.0 316.0 C511.7 317.5 522.8 321.8 530.0 325.0 C537.2 328.2 547.5 333.3 551.0 335.0" fill="none" stroke="#ebebeb" stroke-width="1.7"/>
<path d="M508.0 356.0 C511.7 356.7 523.3 359.0 530.0 360.0 C536.7 361.0 545.0 361.7 548.0 362.0" fill="none" stroke="#ebebeb" stroke-width="1.7"/>
<path d="M600.0 380.0 C608.3 381.7 630.5 389.2 650.0 390.0 C669.5 390.8 705.8 385.8 717.0 385.0" fill="none" stroke="#ebebeb" stroke-width="1.7"/>
<path d="M690.0 310.0 C692.5 314.2 700.5 328.3 705.0 335.0 C709.5 341.7 715.0 347.5 717.0 350.0" fill="none" stroke="#ebebeb" stroke-width="1.7"/>
<path d="M640.0 291.0 C646.7 292.5 667.2 297.7 680.0 300.0 C692.8 302.3 710.8 304.2 717.0 305.0" fill="none" stroke="#ebebeb" stroke-width="1.7"/>
<path d="M560.0 300.0 C566.7 301.7 586.7 306.7 600.0 310.0 C613.3 313.3 633.3 318.3 640.0 320.0" fill="none" stroke="#ebebeb" stroke-width="1.7"/>
<path d="M220.7 67.0 C220.7 69.0 219.2 75.4 220.7 79.0 C222.2 82.6 225.3 84.8 229.9 88.4 C234.5 92.0 242.4 95.6 248.0 100.7 C253.6 105.8 260.3 112.4 263.6 119.0 C266.9 125.6 268.8 132.1 268.0 140.5 C267.2 148.9 261.0 162.2 259.0 169.5 C257.0 176.8 257.2 176.6 256.0 184.0 C254.8 191.4 251.8 206.3 251.8 213.7 C251.8 221.1 253.3 223.6 256.0 228.5 C258.7 233.4 264.0 239.1 268.0 243.0 C272.0 246.9 274.9 249.5 279.8 252.0 C284.7 254.5 287.5 256.0 297.5 258.0 C307.5 260.0 332.9 263.0 340.0 264.0" fill="none" stroke="#dadddf" stroke-width="1.8"/>
<path d="M205.0 260.0 C208.8 262.7 220.7 270.8 228.0 276.0 C235.3 281.2 240.3 286.0 249.0 291.0 C257.7 296.0 271.5 302.3 280.0 306.0 C288.5 309.7 289.5 311.5 300.0 313.0 C310.5 314.5 326.3 314.7 343.0 315.0 C359.7 315.3 383.5 315.0 400.0 315.0 C416.5 315.0 430.0 315.8 442.0 315.0 C454.0 314.2 461.8 312.2 472.0 310.0 C482.2 307.8 495.3 305.3 503.0 302.0 C510.7 298.7 514.7 297.3 518.0 290.0 C521.3 282.7 522.7 267.5 523.0 258.0 C523.3 248.5 520.5 237.2 520.0 233.0" fill="none" stroke="#e2e2e2" stroke-width="1.8"/>
<path d="M205.0 260.0 C208.8 262.7 220.7 270.8 228.0 276.0 C235.3 281.2 240.3 286.0 249.0 291.0 C257.7 296.0 271.5 302.3 280.0 306.0 C288.5 309.7 289.5 311.5 300.0 313.0 C310.5 314.5 326.3 314.7 343.0 315.0 C359.7 315.3 383.5 315.0 400.0 315.0 C416.5 315.0 430.0 315.8 442.0 315.0 C454.0 314.2 461.8 312.2 472.0 310.0 C482.2 307.8 495.3 305.3 503.0 302.0 C510.7 298.7 514.7 297.3 518.0 290.0 C521.3 282.7 522.7 267.5 523.0 258.0 C523.3 248.5 520.5 237.2 520.0 233.0" fill="none" stroke="#fcfcfc" stroke-width="0.6"/>
<path d="M300.0 262.0 C305.2 265.8 320.7 279.3 331.0 285.0 C341.3 290.7 351.8 292.8 362.0 296.0 C372.2 299.2 381.8 301.2 392.0 304.0 C402.2 306.8 414.7 311.2 423.0 313.0 C431.3 314.8 438.8 314.7 442.0 315.0" fill="none" stroke="#e2e2e2" stroke-width="1.8"/>
<path d="M300.0 262.0 C305.2 265.8 320.7 279.3 331.0 285.0 C341.3 290.7 351.8 292.8 362.0 296.0 C372.2 299.2 381.8 301.2 392.0 304.0 C402.2 306.8 414.7 311.2 423.0 313.0 C431.3 314.8 438.8 314.7 442.0 315.0" fill="none" stroke="#fcfcfc" stroke-width="0.6"/>
<path d="M359.3 60.0 L359.3 60.2 L359.2 60.4 L359.2 60.8 L359.2 61.3 L359.1 61.9 L359.1 62.5 L359.1 63.3 L359.1 64.1 L359.2 65.0 L359.2 65.9 L359.4 66.9 L359.6 68.0 L359.8 69.1 L360.2 70.2 L360.5 71.3 L360.9 72.4 L361.3 73.6 L361.7 74.7 L362.1 75.8 L362.4 76.8 L362.7 77.9 L363.0 78.9 L363.2 79.8 L363.3 80.6 L363.4 81.5 L363.5 82.4 L363.5 83.3 L363.5 84.3 L363.5 85.2 L363.5 86.2 L363.4 87.2 L363.3 88.2 L363.2 89.3 L363.1 90.3 L363.0 91.4 L362.9 92.4 L362.7 93.4 L362.6 94.4 L362.4 95.4 L362.3 96.5 L362.1 97.5 L361.8 98.5 L361.6 99.6 L361.4 100.6 L361.1 101.7 L360.9 102.8 L360.6 103.9 L360.4 104.9 L360.2 105.9 L359.9 106.8 L359.6 107.8 L359.2 108.9 L358.8 110.0 L358.5 111.1 L358.1 112.3 L357.7 113.5 L357.4 114.8 L357.2 116.2 L357.0 117.6 L357.0 119.0 L357.1 120.3 L357.1 121.5 L357.2 122.7 L357.4 123.9 L357.7 125.2 L358.0 126.5 L358.4 127.8 L358.9 129.1 L359.4 130.4 L360.1 131.7 L361.0 133.0 L361.9 134.3 L363.0 135.6 L364.2 136.8 L365.5 138.1 L366.8 139.2 L368.2 140.4 L369.7 141.5 L371.1 142.6 L372.6 143.7 L374.1 144.8 L375.5 145.9 L376.9 146.9 L378.2 148.0 L379.6 149.0 L381.1 150.1 L382.5 151.2 L384.0 152.3 L385.5 153.4 L387.0 154.4 L388.4 155.5 L389.8 156.5 L391.2 157.5 L392.6 158.5 L393.8 159.5 L395.0 160.5 L396.2 161.5 L397.4 162.5 L398.6 163.5 L399.7 164.5 L400.8 165.5 L401.8 166.5 L402.8 167.5 L403.8 168.5 L404.7 169.4 L405.5 170.4 L406.2 171.3 L406.9 172.2 L407.5 173.1 L408.0 174.0 L408.5 174.9 L409.0 175.8 L409.3 176.7 L409.7 177.6 L410.0 178.6 L410.3 179.6 L410.5 180.5 L410.8 181.6 L411.0 182.6 L411.2 183.6 L411.4 184.6 L411.5 185.5 L411.7 186.5 L411.7 187.4 L411.8 188.4 L411.8 189.4 L411.8 190.5 L411.9 191.5 L411.9 192.6 L411.9 193.8 L411.9 194.9 L411.9 196.0 L412.0 197.1 L412.0 198.2 L412.0 199.4 L412.0 200.5 L411.9 201.7 L411.9 202.8 L411.9 204.0 L411.8 205.2 L411.8 206.5 L411.9 207.7 L411.9 209.0 L412.0 210.2 L412.1 211.5 L412.2 212.7 L412.3 214.0 L412.5 215.3 L412.7 216.5 L412.9 217.8 L413.0 219.0 L413.2 220.2 L413.4 221.4 L413.6 222.6 L413.8 223.8 L413.9 224.9 L414.1 226.1 L414.2 227.3 L414.4 228.4 L414.5 229.6 L414.7 230.7 L414.9 231.8 L415.0 232.9 L415.1 234.0 L415.2 235.0 L415.3 236.0 L415.3 237.0 L415.3 238.0 L415.3 238.9 L415.2 239.8 L415.0 240.7 L414.9 241.7 L414.7 242.6 L414.5 243.6 L414.3 244.6 L414.1 245.7 L413.9 246.7 L413.7 247.8 L413.6 248.9 L413.6 250.0 L413.6 250.9 L413.6 251.8 L413.6 252.7 L413.7 253.6 L413.8 254.4 L413.9 255.3 L414.1 256.1 L414.3 257.0 L414.5 257.8 L414.8 258.7 L415.2 259.6 L415.6 260.5 L416.1 261.4 L416.6 262.3 L417.2 263.2 L417.8 264.1 L418.4 265.0 L419.1 265.8 L419.7 266.6 L420.4 267.4 L421.0 268.2 L421.6 268.9 L422.2 269.6 L422.7 270.4 L423.2 271.1 L423.8 271.9 L424.3 272.7 L424.9 273.4 L425.4 274.2 L425.9 274.9 L426.5 275.7 L427.0 276.5 L427.5 277.2 L428.0 278.0 L428.5 278.7 L429.0 279.5 L429.5 280.3 L430.1 281.1 L430.6 281.9 L431.1 282.7 L431.6 283.4 L432.1 284.2 L432.6 285.0 L433.0 285.7 L433.5 286.5 L433.9 287.2 L434.3 288.0 L434.7 288.7 L435.1 289.4 L435.4 290.2 L435.8 291.0 L436.1 291.8 L436.4 292.6 L436.7 293.3 L437.0 294.1 L437.3 294.9 L437.6 295.8 L437.8 296.6 L438.1 297.4 L438.3 298.2 L438.6 298.9 L438.8 299.7 L439.0 300.4 L439.2 301.2 L439.3 301.9 L439.5 302.7 L439.7 303.5 L439.9 304.3 L440.0 305.2 L440.2 306.0 L440.4 307.0 L440.6 307.9 L440.8 308.8 L441.0 309.8 L441.2 310.8 L441.4 311.8 L441.7 312.8 L441.9 313.9 L442.1 315.0 L442.3 316.1 L442.6 317.3 L442.9 318.5 L443.2 319.8 L443.5 321.1 L443.9 322.5 L444.3 323.9 L444.8 325.2 L445.2 326.6 L445.7 327.9 L446.2 329.3 L446.6 330.7 L447.1 332.2 L447.6 333.7 L448.0 335.2 L448.5 336.8 L448.9 338.5 L449.3 340.3 L449.7 342.3 L450.2 344.3 L450.6 346.4 L451.0 348.5 L451.5 350.7 L451.8 352.9 L452.2 355.1 L452.5 357.3 L452.8 359.5 L453.0 361.6 L453.2 363.6 L453.2 365.7 L453.3 367.8 L453.2 370.0 L453.2 372.2 L453.0 374.5 L452.9 376.7 L452.7 378.9 L452.5 381.0 L452.3 383.1 L452.1 385.0 L451.9 386.9 L451.8 388.6 L451.6 390.0 L451.4 391.3 L451.2 392.5 L451.0 393.6 L450.8 394.7 L450.6 395.7 L450.4 396.6 L450.2 397.5 L450.0 398.5 L449.7 399.4 L449.6 400.4 L449.4 401.4 L449.3 402.3 L449.2 403.3 L449.1 404.2 L449.0 405.0 L449.0 405.8 L448.9 406.6 L448.9 407.3 L448.8 407.9 L448.8 408.5 L448.8 409.0 L448.8 409.4 L448.8 409.7 L457.2 410.3 L457.3 409.9 L457.3 409.4 L457.3 408.9 L457.3 408.3 L457.4 407.7 L457.4 407.0 L457.4 406.4 L457.5 405.7 L457.5 404.9 L457.6 404.2 L457.7 403.4 L457.8 402.6 L457.9 401.9 L458.1 401.1 L458.2 400.3 L458.4 399.5 L458.7 398.5 L458.9 397.5 L459.1 396.4 L459.4 395.3 L459.6 394.0 L459.8 392.6 L460.0 391.1 L460.2 389.4 L460.4 387.7 L460.6 385.9 L460.8 383.9 L461.0 381.8 L461.2 379.6 L461.4 377.3 L461.5 375.0 L461.6 372.6 L461.7 370.2 L461.8 367.8 L461.7 365.5 L461.6 363.2 L461.5 360.9 L461.2 358.5 L460.9 356.2 L460.6 353.8 L460.2 351.5 L459.8 349.2 L459.4 346.9 L458.9 344.7 L458.5 342.5 L458.0 340.4 L457.6 338.4 L457.1 336.5 L456.7 334.7 L456.2 332.9 L455.7 331.2 L455.2 329.6 L454.7 328.0 L454.2 326.6 L453.6 325.1 L453.1 323.8 L452.7 322.5 L452.2 321.3 L451.8 320.1 L451.5 318.9 L451.1 317.7 L450.8 316.5 L450.5 315.4 L450.3 314.3 L450.0 313.2 L449.8 312.2 L449.5 311.1 L449.3 310.1 L449.1 309.1 L448.8 308.1 L448.6 307.1 L448.4 306.1 L448.1 305.2 L447.9 304.3 L447.7 303.4 L447.5 302.6 L447.3 301.8 L447.1 300.9 L446.9 300.1 L446.7 299.3 L446.5 298.4 L446.2 297.6 L445.9 296.7 L445.7 295.8 L445.4 295.0 L445.1 294.1 L444.7 293.2 L444.4 292.4 L444.1 291.5 L443.7 290.6 L443.4 289.7 L443.0 288.8 L442.6 287.9 L442.2 287.1 L441.8 286.2 L441.3 285.3 L440.8 284.4 L440.3 283.6 L439.8 282.7 L439.3 281.9 L438.8 281.0 L438.2 280.2 L437.7 279.4 L437.1 278.6 L436.6 277.8 L436.0 277.0 L435.5 276.3 L435.0 275.5 L434.4 274.7 L433.9 273.9 L433.3 273.1 L432.8 272.4 L432.2 271.6 L431.7 270.8 L431.1 270.1 L430.6 269.3 L430.0 268.5 L429.4 267.8 L428.9 267.0 L428.3 266.2 L427.7 265.4 L427.0 264.6 L426.4 263.8 L425.7 263.0 L425.0 262.2 L424.4 261.5 L423.8 260.8 L423.3 260.0 L422.8 259.4 L422.3 258.7 L421.9 258.1 L421.6 257.5 L421.3 256.9 L421.1 256.3 L420.9 255.8 L420.7 255.2 L420.5 254.6 L420.4 254.1 L420.3 253.5 L420.2 252.9 L420.2 252.2 L420.1 251.5 L420.1 250.8 L420.0 250.0 L420.1 249.3 L420.1 248.6 L420.2 247.8 L420.4 246.9 L420.6 245.9 L420.8 244.9 L421.0 243.9 L421.2 242.8 L421.4 241.7 L421.5 240.5 L421.6 239.3 L421.7 238.0 L421.7 236.8 L421.6 235.7 L421.5 234.5 L421.4 233.3 L421.3 232.1 L421.1 231.0 L420.9 229.8 L420.8 228.7 L420.6 227.5 L420.4 226.4 L420.3 225.2 L420.1 224.1 L419.9 222.9 L419.7 221.7 L419.6 220.5 L419.4 219.2 L419.2 218.0 L419.0 216.8 L418.8 215.6 L418.6 214.4 L418.4 213.2 L418.3 212.1 L418.1 210.9 L418.0 209.8 L418.0 208.7 L417.9 207.5 L417.9 206.4 L417.9 205.3 L417.9 204.1 L417.9 203.0 L417.9 201.8 L418.0 200.6 L418.0 199.5 L418.0 198.3 L418.1 197.1 L418.1 196.0 L418.1 194.9 L418.1 193.8 L418.2 192.7 L418.2 191.6 L418.2 190.5 L418.2 189.4 L418.2 188.3 L418.2 187.1 L418.2 186.0 L418.1 184.8 L418.0 183.6 L417.8 182.4 L417.6 181.3 L417.4 180.2 L417.2 179.0 L416.9 177.9 L416.6 176.7 L416.3 175.5 L415.9 174.4 L415.5 173.1 L415.0 171.9 L414.4 170.7 L413.8 169.4 L413.1 168.2 L412.3 167.0 L411.4 165.7 L410.5 164.5 L409.6 163.3 L408.6 162.2 L407.5 161.0 L406.4 159.8 L405.3 158.7 L404.1 157.5 L403.0 156.4 L401.8 155.3 L400.6 154.1 L399.3 153.0 L397.9 151.8 L396.6 150.7 L395.1 149.5 L393.7 148.4 L392.3 147.3 L390.8 146.1 L389.3 145.1 L387.9 144.0 L386.5 143.0 L385.1 141.9 L383.8 140.8 L382.4 139.7 L380.9 138.6 L379.5 137.5 L378.0 136.5 L376.6 135.4 L375.2 134.3 L373.9 133.3 L372.7 132.3 L371.6 131.3 L370.6 130.4 L369.8 129.5 L369.1 128.7 L368.5 127.9 L368.0 127.1 L367.6 126.3 L367.3 125.6 L367.0 124.8 L366.8 124.1 L366.6 123.3 L366.5 122.5 L366.3 121.6 L366.3 120.8 L366.2 119.8 L366.2 119.0 L366.2 118.2 L366.3 117.5 L366.4 116.7 L366.6 115.9 L366.9 114.9 L367.2 114.0 L367.6 112.9 L367.9 111.8 L368.3 110.7 L368.7 109.5 L369.1 108.3 L369.4 107.1 L369.7 106.0 L369.9 104.9 L370.2 103.8 L370.4 102.7 L370.7 101.6 L370.9 100.5 L371.2 99.3 L371.4 98.2 L371.6 97.1 L371.8 95.9 L372.0 94.7 L372.1 93.6 L372.3 92.5 L372.4 91.4 L372.5 90.2 L372.6 89.1 L372.7 87.9 L372.8 86.8 L372.9 85.6 L372.9 84.4 L372.9 83.2 L372.9 81.9 L372.8 80.7 L372.7 79.4 L372.4 78.0 L372.1 76.7 L371.8 75.3 L371.4 74.0 L371.0 72.8 L370.6 71.6 L370.2 70.4 L369.8 69.3 L369.5 68.3 L369.2 67.4 L369.0 66.7 L368.8 66.0 L368.7 65.5 L368.7 64.9 L368.6 64.3 L368.6 63.8 L368.6 63.3 L368.6 62.8 L368.6 62.4 L368.7 61.9 L368.7 61.4 L368.7 61.0 L368.7 60.5 L368.7 60.0 Z" fill="#d4d9db"/>
<text x="392" y="237.9" font-family="Liberation Sans" font-size="9" letter-spacing="0.45" fill="#fff" stroke="#fff" stroke-width="2" stroke-linejoin="round">BUTUAN</text>
<text x="392" y="237.9" font-family="Liberation Sans" font-size="9" letter-spacing="0.45" fill="#5a70a6">BUTUAN</text>
<text x="0" y="0" transform="translate(205 261.5) rotate(35.5)" font-family="Liberation Sans" font-size="5.1" fill="#9a9a9a" stroke="#fafafa" stroke-width="0.8" paint-order="stroke">Butuan Diversion Road</text>
<text x="341" y="317" font-family="Liberation Sans" font-size="5.2" fill="#9a9a9a" stroke="#fafafa" stroke-width="0.8" paint-order="stroke">Butuan Diversion Road</text>
<text x="0" y="0" transform="translate(449.5 316.5) rotate(-11.5)" font-family="Liberation Sans" font-size="5.1" fill="#9a9a9a" stroke="#fafafa" stroke-width="0.8" paint-order="stroke">Butuan Diversion Road</text>
<text x="0" y="0" transform="translate(94 204) rotate(28)" font-family="Liberation Sans" font-size="4.2" fill="#b0b0b0">Butuan City Road</text>
</svg>
<!-- markers -->
<div class="mk" style="left:326.7px;top:119.1px;background:#e6505c"></div>
<div class="mk" style="left:313.3px;top:148.4px;background:#e6505c"></div>
<div class="mk" style="left:303.9px;top:154.7px;background:#eeae2a"></div>
<div class="mk" style="left:326.4px;top:161.3px;background:#2ab55c"></div>
<div class="mk" style="left:316.7px;top:167.5px;background:#2ab55c"></div>
<div class="mk" style="left:294.3px;top:175.1px;background:#e6505c"></div>
<div class="mk" style="left:246.2px;top:191.5px;background:#eeae2a"></div>
<div class="mk" style="left:230px;top:208px;background:#2ab55c"></div>
<div class="mk" style="left:294.2px;top:230.8px;background:#e9b52a"></div>
<!-- zoom -->
<div class="abs" style="left:6.2px;top:5.8px;width:18.3px;height:35.2px;background:#fff;border-radius:2px;box-shadow:0 0 0 1.2px rgba(0,0,0,.2)"></div>
<div class="abs" style="left:6.2px;top:23.3px;width:18.3px;height:1px;background:#e4e4e4"></div>
<div class="abs" style="left:11.9px;top:16.1px;width:7.4px;height:1.8px;background:#1a1a1a"></div>
<div class="abs" style="left:14.7px;top:13.3px;width:1.8px;height:7.4px;background:#1a1a1a"></div>
<div class="abs" style="left:12.1px;top:33px;width:7px;height:1.8px;background:#222"></div>
<!-- legend -->
<div class="abs" style="left:14px;top:298px;width:162px;height:21px;background:#fff;border-radius:7px;box-shadow:0 2px 6px rgba(0,0,0,.10)"></div>
<div class="abs" style="left:23px;top:304.5px;width:5.6px;height:5.6px;border-radius:50%;background:#14b060"></div>
<div class="t" style="left:33px;top:305.5px;font-size:5.5px;font-weight:bold;letter-spacing:0.7px;color:#1f9e5c">SMOOTH</div>
<div class="abs" style="left:74px;top:304.5px;width:5.6px;height:5.6px;border-radius:50%;background:#e8b020"></div>
<div class="t" style="left:84px;top:305.5px;font-size:5.5px;font-weight:bold;letter-spacing:0.7px;color:#c9a03a">MODERATE</div>
<div class="abs" style="left:132.7px;top:304.5px;width:5.6px;height:5.6px;border-radius:50%;background:#e0243c"></div>
<div class="t" style="left:142.5px;top:305.5px;font-size:5.5px;font-weight:bold;letter-spacing:0.7px;color:#d02a48">SEVERE</div>
<!-- updated -->
<div class="abs" style="left:502.7px;top:305px;width:109px;height:12.3px;background:rgba(255,255,255,.85);border-radius:4px"></div>
<div class="t" style="left:510.3px;top:308.8px;font-size:5.3px;font-weight:bold;letter-spacing:0.72px;color:#555">UPDATED: FEB 22, 2026 11:15</div>
<!-- attribution -->
<div class="abs" style="left:462px;top:322px;width:163px;height:11px;background:rgba(255,255,255,.8)"></div>
<div class="t" style="left:465px;top:324.1px;font-size:6.65px;color:#3a3a3a"><span style="display:inline-block;width:7px;height:4.5px;background:linear-gradient(#3a6bc8 50%,#f0c93a 50%);margin-right:1.5px;vertical-align:0px"></span><span style="color:#2a7ab0">Leaflet</span> | © <span style="color:#2a7ab0">OpenStreetMap</span> contributors © <span style="color:#2a7ab0">CARTO</span></div>
<div class="abs" style="left:436px;top:15.3px;width:174.5px;height:206.2px;background:#fff;border-radius:9px;box-shadow:0 6px 22px rgba(0,0,0,.13),0 1px 3px rgba(0,0,0,.05)"></div>
<div class="t" style="left:448.20px;top:29.73px;font-size:7.50px;font-family:'Liberation Sans',sans-serif;font-weight:bold;letter-spacing:0.022px;color:#161616;">Road Segment Details</div>
<div class="t" style="left:448.20px;top:44.18px;font-size:5.60px;font-family:'Liberation Sans',sans-serif;font-weight:normal;letter-spacing:0.674px;color:#c2c2c2;">BUTUAN CITY • FEB 22, 2026</div>
<svg class="abs" style="left:587.5px;top:32px" width="7" height="7" viewBox="0 0 7 7"><path d="M1 1L6 6M6 1L1 6" stroke="#8a8a8a" stroke-width="0.8"/></svg>
<div class="t" style="left:448.20px;top:64.59px;font-size:7.00px;font-family:'Liberation Sans',sans-serif;font-weight:normal;letter-spacing:0.000px;color:#858585;">Location</div>
<div class="t" style="left:504.80px;top:64.70px;font-size:6.80px;font-family:'Liberation Sans',sans-serif;font-weight:bold;letter-spacing:-0.044px;color:#222;">Barangay Ampayon (National</div>
<div class="t" style="left:568.08px;top:74.00px;font-size:6.80px;font-family:'Liberation Sans',sans-serif;font-weight:bold;letter-spacing:0.000px;color:#222;">Highway)</div>
<div class="t" style="left:448.20px;top:95.89px;font-size:7.00px;font-family:'Liberation Sans',sans-serif;font-weight:normal;letter-spacing:0.000px;color:#858585;">Coordinates</div>
<div class="t" style="left:534.00px;top:96.85px;font-size:6.70px;font-family:'Liberation Mono',monospace;font-weight:normal;letter-spacing:-0.002px;color:#555;">8.9554, 125.6015</div>
<div class="t" style="left:448.20px;top:118.89px;font-size:7.00px;font-family:'Liberation Sans',sans-serif;font-weight:normal;letter-spacing:0.042px;color:#858585;">Mean Vibration</div>
<div class="t" style="left:561.50px;top:119.54px;font-size:6.90px;font-family:'Liberation Mono',monospace;font-weight:bold;letter-spacing:-0.058px;color:#222;">2.45 m/s²</div>
<div class="t" style="left:448.20px;top:140.59px;font-size:7.00px;font-family:'Liberation Sans',sans-serif;font-weight:normal;letter-spacing:0.000px;color:#858585;">RMS Value</div>
<div class="t" style="left:561.50px;top:141.84px;font-size:6.90px;font-family:'Liberation Mono',monospace;font-weight:bold;letter-spacing:-0.058px;color:#222;">0.88 m/s²</div>
<div class="t" style="left:448.20px;top:163.29px;font-size:7.00px;font-family:'Liberation Sans',sans-serif;font-weight:normal;letter-spacing:0.000px;color:#858585;">Variance</div>
<div class="t" style="left:561.50px;top:164.54px;font-size:6.90px;font-family:'Liberation Mono',monospace;font-weight:bold;letter-spacing:-0.058px;color:#222;">0.62 m/s²</div>
<div class="t" style="left:448.40px;top:190.69px;font-size:7.00px;font-family:'Liberation Sans',sans-serif;font-weight:normal;letter-spacing:0.020px;color:#858585;">Predicted Class</div>
<div class="abs" style="left:539.3px;top:189.2px;width:57px;height:11px;border-radius:5.5px;background:#fef8dd"></div>
<div class="abs" style="left:546.6px;top:191.9px;width:5.6px;height:5.6px;border-radius:50%;border:0.8px solid #e5b62e"></div>
<div class="t" style="left:557.80px;top:191.88px;font-size:5.40px;font-family:'Liberation Sans',sans-serif;font-weight:bold;letter-spacing:0.243px;color:#e2b01f;">MODERATE</div>
</div>

<!-- right cards -->
<div class="card" style="left:735px;top:34px;width:196px;height:240px"></div>
<div class="t" style="left:748.5px;top:47.6px;font-size:6px;font-weight:bold;letter-spacing:0.78px;color:#666">OVERALL SUMMARY</div>
<div class="t" style="left:747.5px;top:65px;font-size:19px;color:#2a2a2a">1,265</div>
<div class="t" style="left:799.5px;top:74px;font-size:6.1px;letter-spacing:0.5px;color:#b0b0b0">Road segments monitored</div>
<svg class="abs" style="left:783px;top:101px" width="101" height="101" viewBox="-50.5 -50.5 101 101"><path d="M-9.96 -37.19 A38.50 38.50 0 0 1 38.50 -0.00" fill="none" stroke="#22c55e" stroke-width="9.8"/><path d="M38.35 3.36 A38.50 38.50 0 0 1 -13.17 36.18" fill="none" stroke="#ef4444" stroke-width="9.8"/><path d="M-16.27 34.89 A38.50 38.50 0 0 1 -13.17 -36.18" fill="none" stroke="#eab308" stroke-width="9.8"/></svg>
<div class="abs" style="left:748.4px;top:217.5px;width:4px;height:4px;border-radius:50%;background:#1fb865"></div>
<div class="t" style="left:757px;top:216.90px;font-size:8.2px;color:#444">Smooth</div>
<div class="t" style="right:106px;top:216.70px;font-size:7.5px;color:#333">36%</div>
<div class="abs" style="left:748.4px;top:235.1px;width:4px;height:4px;border-radius:50%;background:#e8b020"></div>
<div class="t" style="left:757px;top:234.90px;font-size:8.2px;color:#444">Moderate</div>
<div class="t" style="right:106px;top:234.60px;font-size:7.5px;color:#333">48%</div>
<div class="abs" style="left:748.4px;top:252.7px;width:4px;height:4px;border-radius:50%;background:#e0484d"></div>
<div class="t" style="left:757px;top:252.90px;font-size:8.2px;color:#444">Severe</div>
<div class="t" style="right:106px;top:252.60px;font-size:7.5px;color:#333">36%</div>

<div class="card" style="left:735px;top:288px;width:196px;height:187px"></div>
<div class="t" style="left:748.5px;top:302.8px;font-size:6px;font-weight:bold;letter-spacing:0.8px;color:#5a5a5a">CONDITION HISTORY (7 DAYS)</div>
<div class="abs" style="left:758.85px;top:324.60px;width:7.8px;height:7.8px;border-radius:50%;background:#eab308"></div>
<div class="t" style="left:769.20px;top:323.60px;font-size:9.4px;color:#d4b02a">Moderate</div>
<div class="abs" style="left:814.40px;top:324.60px;width:7.8px;height:7.8px;border-radius:50%;background:#ef4444"></div>
<div class="t" style="left:824.70px;top:323.60px;font-size:9.4px;color:#e04e52">Severe</div>
<div class="abs" style="left:859.10px;top:324.60px;width:7.8px;height:7.8px;border-radius:50%;background:#22c55e"></div>
<div class="t" style="left:869.40px;top:323.60px;font-size:9.4px;color:#3dba6e">Smooth</div>
<div class="t" style="right:244.50px;top:339.10px;font-size:5.8px;color:#777">1000</div>
<div class="t" style="right:244.50px;top:363.70px;font-size:5.8px;color:#777">750</div>
<div class="t" style="right:244.50px;top:389.00px;font-size:5.8px;color:#777">500</div>
<div class="t" style="right:244.50px;top:413.50px;font-size:5.8px;color:#777">250</div>
<div class="t" style="right:244.50px;top:438.80px;font-size:5.8px;color:#777">0</div>
<svg class="abs" style="left:0;top:0" width="1024" height="542"><rect x="786.00" y="351.70" width="14.80" height="14.40" fill="#ef4444"/><rect x="786.00" y="366.10" width="14.80" height="30.30" fill="#eab308"/><rect x="786.00" y="396.40" width="14.80" height="44.40" fill="#22c55e"/><rect x="804.90" y="351.20" width="14.80" height="14.90" fill="#ef4444"/><rect x="804.90" y="366.10" width="14.80" height="31.00" fill="#eab308"/><rect x="804.90" y="397.10" width="14.80" height="43.70" fill="#22c55e"/><rect x="823.50" y="352.00" width="14.80" height="14.10" fill="#ef4444"/><rect x="823.50" y="366.10" width="14.80" height="28.90" fill="#eab308"/><rect x="823.50" y="395.00" width="14.80" height="45.80" fill="#22c55e"/><rect x="842.30" y="350.60" width="14.80" height="15.50" fill="#ef4444"/><rect x="842.30" y="366.10" width="14.80" height="32.10" fill="#eab308"/><rect x="842.30" y="398.20" width="14.80" height="42.60" fill="#22c55e"/><rect x="861.00" y="349.40" width="14.80" height="16.70" fill="#ef4444"/><rect x="861.00" y="366.10" width="14.80" height="33.40" fill="#eab308"/><rect x="861.00" y="399.50" width="14.80" height="41.30" fill="#22c55e"/><rect x="879.80" y="348.00" width="14.80" height="17.60" fill="#ef4444"/><rect x="879.80" y="365.60" width="14.80" height="33.90" fill="#eab308"/><rect x="879.80" y="399.50" width="14.80" height="41.30" fill="#22c55e"/><rect x="898.40" y="346.50" width="14.80" height="18.40" fill="#ef4444"/><rect x="898.40" y="364.90" width="14.80" height="35.30" fill="#eab308"/><rect x="898.40" y="400.20" width="14.80" height="40.60" fill="#22c55e"/></svg>
<div class="t" style="left:778.40px;top:445.50px;width:30px;text-align:center;font-size:5.9px;color:#8a8a8a">02/16</div>
<div class="t" style="left:797.30px;top:445.50px;width:30px;text-align:center;font-size:5.9px;color:#8a8a8a">02/17</div>
<div class="t" style="left:815.90px;top:445.50px;width:30px;text-align:center;font-size:5.9px;color:#8a8a8a">02/18</div>
<div class="t" style="left:834.70px;top:445.50px;width:30px;text-align:center;font-size:5.9px;color:#8a8a8a">02/19</div>
<div class="t" style="left:853.40px;top:445.50px;width:30px;text-align:center;font-size:5.9px;color:#8a8a8a">02/20</div>
<div class="t" style="left:872.20px;top:445.50px;width:30px;text-align:center;font-size:5.9px;color:#8a8a8a">02/21</div>
<div class="t" style="left:890.80px;top:445.50px;width:30px;text-align:center;font-size:5.9px;color:#8a8a8a">02/22</div>

<div class="card" style="left:735px;top:491.5px;width:196px;height:80px"></div>
<div class="t" style="left:748.7px;top:505.9px;font-size:7px;letter-spacing:0px;color:#4a4a4a">TIME FILTER</div>
<div class="t" style="left:896px;top:506.5px;font-size:6px;font-weight:bold;letter-spacing:0.45px;color:#5a4bc8">FILTER</div>
<div class="abs" style="left:748px;top:524.8px;width:170px;height:24px;border-radius:5px;background:#f9f9f9;box-shadow:0 0 0 1px #f3f3f3"></div>
<svg class="abs" style="left:755px;top:530.2px" width="9" height="9" viewBox="0 0 9 9"><g fill="none" stroke="#aaa" stroke-width="0.9"><rect x="1" y="1.5" width="7" height="6.5" rx="1"/><path d="M1 3.5H8M3 0.5V2M6 0.5V2"/></g></svg>
<div class="t" style="left:771px;top:532.3px;font-family:'Liberation Mono',monospace;font-size:6.5px;letter-spacing:0.14px;color:#444">2026-02-16 • 2026-02-22</div>


<!-- bottom cards -->
<div class="card" style="left:92px;top:418.5px;width:303px;height:150px;overflow:hidden"><div class="abs" style="left:0;top:27px;width:303px;height:21px;background:#fdfdfd;border-top:1px solid #f6f6f6;border-bottom:1px solid #f8f8f8"></div><div class="abs" style="left:0;top:74px;width:303px;height:1px;background:#fbfbfb"></div><div class="abs" style="left:0;top:101px;width:303px;height:1px;background:#fbfbfb"></div></div>
<div class="t" style="left:105.70px;top:427.98px;font-size:6.40px;font-family:'Liberation Sans',sans-serif;font-weight:bold;letter-spacing:0.379px;color:#5a5a5a;">RECENT ALERTS</div>
<div class="t" style="left:105.70px;top:453.48px;font-size:5.60px;font-family:'Liberation Sans',sans-serif;font-weight:normal;letter-spacing:0.360px;color:#b0b0b0;">DATE</div>
<div class="t" style="left:215.00px;top:453.48px;font-size:5.60px;font-family:'Liberation Sans',sans-serif;font-weight:normal;letter-spacing:0.584px;color:#b0b0b0;">LOCATION</div>
<div class="t" style="left:332.60px;top:453.48px;font-size:5.60px;font-family:'Liberation Sans',sans-serif;font-weight:normal;letter-spacing:0.734px;color:#b0b0b0;">CLASS</div>
<div class="t" style="left:105.70px;top:475.39px;font-size:7.00px;font-family:'Liberation Sans',sans-serif;font-weight:normal;letter-spacing:0.031px;color:#8a8a8a;">February 22, 2026</div>
<div class="t" style="left:215.00px;top:475.55px;font-size:6.70px;font-family:'Liberation Sans',sans-serif;font-weight:bold;letter-spacing:0.000px;color:#262626;">Lopez Jaena Street</div>
<svg class="abs" style="left:332.60px;top:475.20px" width="7.5" height="7" viewBox="0 0 7.5 7"><path d="M3.75 0.9L6.8 6.2H0.7Z" fill="none" stroke="#c98a94" stroke-width="0.85" stroke-linejoin="round"/><path d="M3.75 2.9V4.2" stroke="#c98a94" stroke-width="0.7"/></svg><div class="t" style="left:342.40px;top:475.50px;font-size:6.80px;font-family:'Liberation Sans',sans-serif;font-weight:bold;letter-spacing:0.000px;color:#d04a5e;">Severe</div>
<div class="t" style="left:105.70px;top:502.19px;font-size:7.00px;font-family:'Liberation Sans',sans-serif;font-weight:normal;letter-spacing:0.031px;color:#8a8a8a;">February 22, 2026</div>
<div class="t" style="left:215.00px;top:502.35px;font-size:6.70px;font-family:'Liberation Sans',sans-serif;font-weight:bold;letter-spacing:0.000px;color:#262626;">R. Calo Street</div>
<svg class="abs" style="left:332.60px;top:502.00px" width="7.5" height="7" viewBox="0 0 7.5 7"><path d="M3.75 0.9L6.8 6.2H0.7Z" fill="none" stroke="#c98a94" stroke-width="0.85" stroke-linejoin="round"/><path d="M3.75 2.9V4.2" stroke="#c98a94" stroke-width="0.7"/></svg><div class="t" style="left:342.40px;top:502.30px;font-size:6.80px;font-family:'Liberation Sans',sans-serif;font-weight:bold;letter-spacing:0.000px;color:#d04a5e;">Severe</div>
<div class="t" style="left:105.70px;top:529.19px;font-size:7.00px;font-family:'Liberation Sans',sans-serif;font-weight:normal;letter-spacing:0.031px;color:#8a8a8a;">February 22, 2026</div>
<div class="t" style="left:215.00px;top:529.35px;font-size:6.70px;font-family:'Liberation Sans',sans-serif;font-weight:bold;letter-spacing:0.000px;color:#262626;">Baan Riverside Road</div>
<svg class="abs" style="left:332.60px;top:529.00px" width="7.5" height="7" viewBox="0 0 7.5 7"><path d="M3.75 0.9L6.8 6.2H0.7Z" fill="none" stroke="#c98a94" stroke-width="0.85" stroke-linejoin="round"/><path d="M3.75 2.9V4.2" stroke="#c98a94" stroke-width="0.7"/></svg><div class="t" style="left:342.40px;top:529.30px;font-size:6.80px;font-family:'Liberation Sans',sans-serif;font-weight:bold;letter-spacing:0.000px;color:#d04a5e;">Severe</div>
<div class="card" style="left:414px;top:418.5px;width:303px;height:150px;overflow:hidden"><div class="abs" style="left:0;top:27px;width:303px;height:21px;background:#fdfdfd;border-top:1px solid #f6f6f6;border-bottom:1px solid #f8f8f8"></div><div class="abs" style="left:0;top:74px;width:303px;height:1px;background:#fbfbfb"></div><div class="abs" style="left:0;top:101px;width:303px;height:1px;background:#fbfbfb"></div></div>
<div class="t" style="left:427.00px;top:427.98px;font-size:6.40px;font-family:'Liberation Sans',sans-serif;font-weight:bold;letter-spacing:0.388px;color:#5a5a5a;">EXPORT DATA</div>
<svg class="abs" style="left:665.5px;top:428px" width="8" height="8" viewBox="0 0 8 8"><g fill="none" stroke="#999" stroke-width="0.8"><path d="M4 1V5M2.3 3.4L4 5L5.7 3.4M1 5.5V7H7V5.5"/></g></svg>
<div class="t" style="left:677.50px;top:429.43px;font-size:5.50px;font-family:'Liberation Sans',sans-serif;font-weight:normal;letter-spacing:0.657px;color:#8a8a8a;">EXPORT</div>
<div class="t" style="left:427.00px;top:453.48px;font-size:5.60px;font-family:'Liberation Sans',sans-serif;font-weight:normal;letter-spacing:0.360px;color:#b0b0b0;">DATE</div>
<div class="t" style="left:514.00px;top:453.48px;font-size:5.60px;font-family:'Liberation Sans',sans-serif;font-weight:normal;letter-spacing:0.584px;color:#b0b0b0;">LOCATION</div>
<div class="t" style="left:669.00px;top:453.48px;font-size:5.60px;font-family:'Liberation Sans',sans-serif;font-weight:normal;letter-spacing:0.734px;color:#b0b0b0;">CLASS</div>
<div class="t" style="left:427.00px;top:475.39px;font-size:7.00px;font-family:'Liberation Sans',sans-serif;font-weight:normal;letter-spacing:0.031px;color:#8a8a8a;">February 22, 2026</div>
<div class="t" style="left:514.00px;top:475.55px;font-size:6.70px;font-family:'Liberation Sans',sans-serif;font-weight:bold;letter-spacing:0.000px;color:#262626;">J.C. Aquino Avenue</div>
<div class="t" style="left:669.00px;top:475.50px;font-size:6.80px;font-family:'Liberation Sans',sans-serif;font-weight:bold;letter-spacing:-0.022px;color:#34a86c;">Smooth</div>
<div class="t" style="left:427.00px;top:502.19px;font-size:7.00px;font-family:'Liberation Sans',sans-serif;font-weight:normal;letter-spacing:0.031px;color:#8a8a8a;">February 22, 2026</div>
<div class="t" style="left:514.00px;top:502.35px;font-size:6.70px;font-family:'Liberation Sans',sans-serif;font-weight:bold;letter-spacing:0.000px;color:#262626;">Montilla Boulevard</div>
<div class="t" style="left:669.00px;top:502.30px;font-size:6.80px;font-family:'Liberation Sans',sans-serif;font-weight:bold;letter-spacing:0.096px;color:#e3b424;">Moderate</div>
<div class="t" style="left:427.00px;top:529.19px;font-size:7.00px;font-family:'Liberation Sans',sans-serif;font-weight:normal;letter-spacing:0.031px;color:#8a8a8a;">February 22, 2026</div>
<div class="t" style="left:514.00px;top:529.35px;font-size:6.70px;font-family:'Liberation Sans',sans-serif;font-weight:bold;letter-spacing:0.000px;color:#262626;">Lopez Jaena Street</div>
<svg class="abs" style="left:669.00px;top:529.00px" width="7.5" height="7" viewBox="0 0 7.5 7"><path d="M3.75 0.9L6.8 6.2H0.7Z" fill="none" stroke="#c98a94" stroke-width="0.85" stroke-linejoin="round"/><path d="M3.75 2.9V4.2" stroke="#c98a94" stroke-width="0.7"/></svg><div class="t" style="left:678.80px;top:529.30px;font-size:6.80px;font-family:'Liberation Sans',sans-serif;font-weight:bold;letter-spacing:0.000px;color:#d04a5e;">Severe</div>
</div></body></html>
